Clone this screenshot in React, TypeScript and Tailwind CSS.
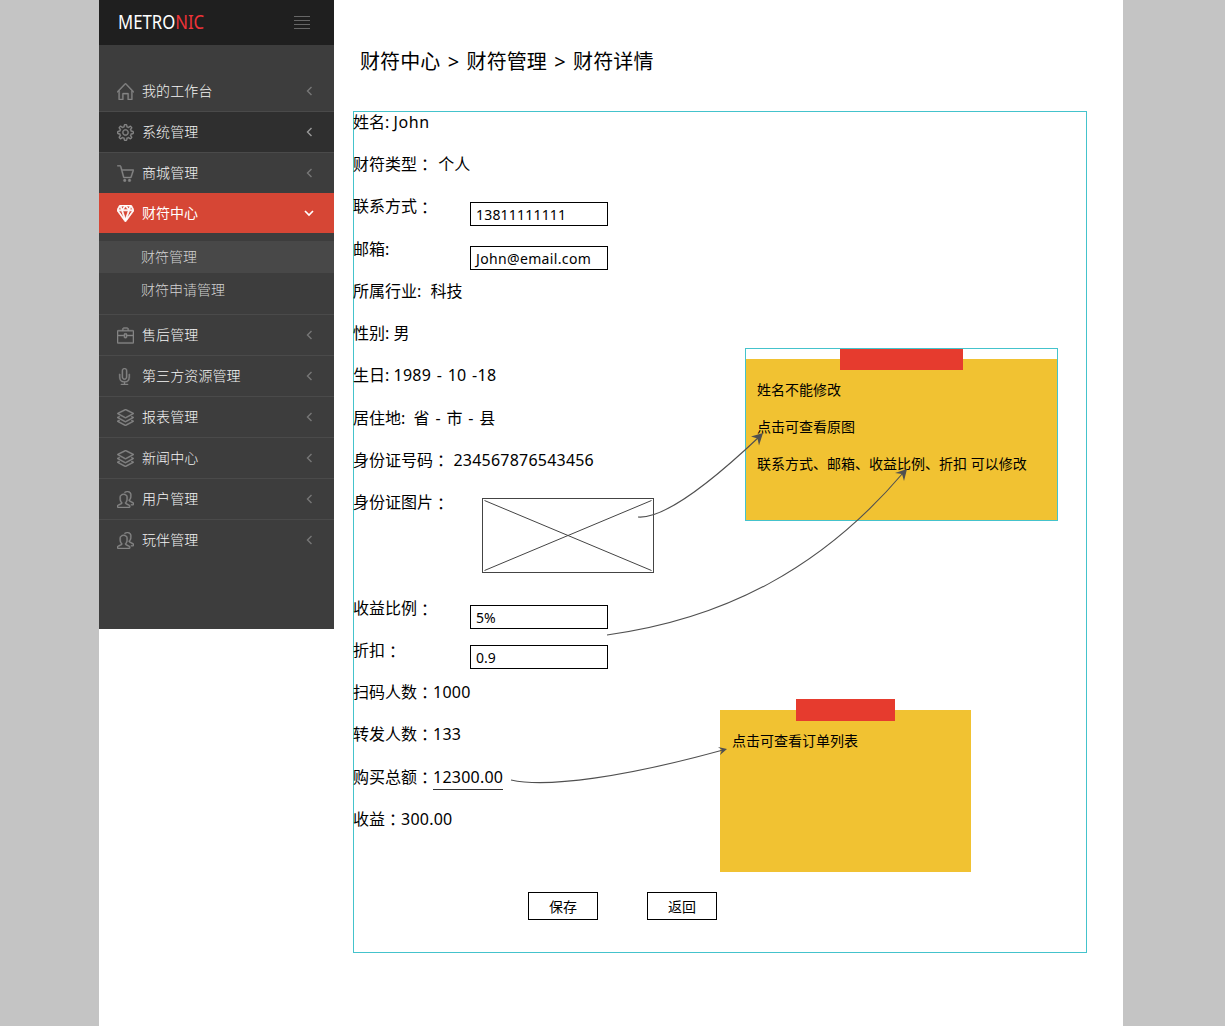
import React from 'react'
import { SlHome, SlSettings, SlBasket, SlDiamond, SlBriefcase, SlMicrophone, SlLayers, SlPeople } from 'react-icons/sl'

type Item = { label: string; icon: React.ReactNode; dark?: boolean; last?: boolean }

const ic = 'size-[17px] stroke-current [stroke-width:24]'
const topItems: Item[] = [
  { label: '我的工作台', icon: <SlHome className={ic} /> },
  { label: '系统管理', icon: <SlSettings className={ic} />, dark: true },
  { label: '商城管理', icon: <SlBasket className={ic} />, last: true },
]
const bottomItems: Item[] = [
  { label: '售后管理', icon: <SlBriefcase className={ic} /> },
  { label: '第三方资源管理', icon: <SlMicrophone className={`${ic} -ml-px`} /> },
  { label: '报表管理', icon: <SlLayers className={ic} /> },
  { label: '新闻中心', icon: <SlLayers className={ic} /> },
  { label: '用户管理', icon: <SlPeople className={ic} /> },
  { label: '玩伴管理', icon: <SlPeople className={ic} />, last: true },
]

function NavItem({ item }: { item: Item }) {
  return (
    <div
      className={`flex items-center border-b pl-[18px] pr-[21px] ${item.last ? 'h-10 border-transparent border-b-0' : 'h-[41px] border-[#4a4a4a]'} ${item.dark ? 'bg-[#2f2f2f]' : ''}`}
    >
      <span className="w-[25px] text-[#858585]">{item.icon}</span>
      <span className="flex-1 text-sm font-light tracking-[0.1px] text-[#f4f4f4]">{item.label}</span>
      <svg width="7" height="10" viewBox="0 0 7 10" fill="none" stroke={item.dark ? '#999' : '#777'} strokeWidth="1.4">
        <path d="M5.5 1 1.5 5l4 4" />
      </svg>
    </div>
  )
}

function Colon() {
  return <span className="relative top-[2px] font-['Noto_Sans_CJK_TC',sans-serif] leading-none">：</span>
}

function Num({ children }: { children: React.ReactNode }) {
  return <span className="tracking-[0.22px]">{children}</span>
}

function Row({ children, tall }: { children: React.ReactNode; tall?: boolean }) {
  return <div className={`flex items-start whitespace-pre ${tall ? 'h-[43px]' : 'h-[42px]'}`}>{children}</div>
}

function Label({ children }: { children: React.ReactNode }) {
  return <span className="h-[21px] w-[117px]">{children}</span>
}

function Field({ value, offset }: { value: string; offset: string }) {
  return (
    <span className={`h-6 w-[138px] border border-black pl-[5px] text-sm leading-[23px] ${offset}`}>{value}</span>
  )
}

function Button({ children }: { children: React.ReactNode }) {
  return <button className="h-7 w-[70px] border border-black pt-px text-sm leading-[26px]">{children}</button>
}

export default function App() {
  return (
    <div className="flex h-[1026px] w-[1225px] overflow-hidden bg-[#c4c4c4] pl-[99px] font-['Noto_Sans','Noto_Sans_CJK_SC',sans-serif] text-black">
      <div className="relative flex w-[1024px] bg-white">
        <aside className="flex h-[629px] w-[235px] shrink-0 flex-col bg-[#3d3d3d]">
          <div className="flex h-[45px] items-center justify-between bg-[#1f1f1f] pl-[19px] pr-6">
            <span className="w-[90px] origin-left scale-x-[0.88] text-[19px] leading-[45px] text-white">
              METRO<span className="text-[#ee3338]">NIC</span>
            </span>
            <span className="flex w-4 flex-col gap-[3px]">
              <i className="h-px bg-[#666]" />
              <i className="h-px bg-[#666]" />
              <i className="h-px bg-[#666]" />
              <i className="h-px bg-[#666]" />
            </span>
          </div>
          <nav className="pt-[26px]">
            {topItems.map((t) => (
              <NavItem key={t.label} item={t} />
            ))}
            <div className="flex h-10 items-center bg-[#d64635] pl-[18px] pr-5 text-white">
              <span className="w-[25px]">
                <SlDiamond className="size-[17px] stroke-white [stroke-width:45]" />
              </span>
              <span className="flex-1 text-sm">财符中心</span>
              <svg width="10" height="7" viewBox="0 0 10 7" fill="none" stroke="white" strokeWidth="1.7">
                <path d="m1 1 4 4 4-4" />
              </svg>
            </div>
            <div className="flex h-[82px] flex-col border-b border-[#4a4a4a] pt-2 text-sm font-light text-[#d2d2d2]">
              <div className="h-8 bg-[#484848] pl-[42px] leading-8">财符管理</div>
              <div className="h-[33px] pl-[42px] leading-[33px]">财符申请管理</div>
            </div>
            {bottomItems.map((t) => (
              <NavItem key={t.label} item={t} />
            ))}
          </nav>
        </aside>

        <main className="flex flex-col pl-[19px] pt-[47px]">
          <h1 className="h-16 whitespace-pre pl-[7px] text-[20px] leading-[30px] tracking-[0.1px] [word-spacing:2px]">财符中心 &gt; 财符管理 &gt; 财符详情</h1>
          <section className="flex h-[842px] w-[734px] flex-col border border-[#44c3cc]">
            <div className="-ml-px flex flex-col text-base leading-[21px]">
              <Row>姓名: <span className="tracking-[0.6px]">John</span></Row>
              <Row>财符类型<Colon /><span className="pl-px"> 个人</span></Row>
              <Row tall>
                <Label>联系方式<Colon /></Label>
                <Field value="13811111111" offset="mt-[6px] tracking-[0.2px]" />
              </Row>
              <Row>
                <Label>邮箱:</Label>
                <Field value="John@email.com" offset="mt-[7px] tracking-[0.35px]" />
              </Row>
              <Row>所属行业:  <span className="pl-px">科技</span></Row>
              <Row>性别: 男</Row>
              <Row tall>生日: <span className="tracking-[0.3px] [word-spacing:1px]">1989 - 10 -18</span></Row>
              <Row>居住地:  省<span className="[word-spacing:1.7px]"> - 市 - 县</span></Row>
              <Row>身份证号码<Colon /><Num> 234567876543456</Num></Row>
              <div className="flex h-[106px] items-start">
                <span className="h-[21px] w-[129px]">身份证图片<Colon /></span>
                <svg className="mt-[6px]" width="172" height="75" viewBox="0 0 172 75" fill="none" stroke="#444">
                  <rect x=".5" y=".5" width="171" height="74" />
                  <path d="M2.5 2.5 169.5 72.5M2.5 72.5 169.5 2.5" />
                </svg>
              </div>
              <Row>
                <Label>收益比例<Colon /></Label>
                <Field value="5%" offset="mt-[7px]" />
              </Row>
              <Row>
                <Label>折扣<Colon /></Label>
                <Field value="0.9" offset="mt-[5px]" />
              </Row>
              <Row>扫码人数<Colon /><Num>1000</Num></Row>
              <Row tall>转发人数<Colon /><Num>133</Num></Row>
              <Row>
                购买总额<Colon />
                <span className="h-[23px] border-b border-[#333] tracking-[0.22px]">12300.00</span>
              </Row>
              <Row>收益<Colon /><Num>300.00</Num></Row>
            </div>
            <div className="flex gap-[49px] pl-[174px] pt-[41px]">
              <Button>保存</Button>
              <Button>返回</Button>
            </div>
          </section>
        </main>

        <div className="absolute left-[646px] top-[348px] flex h-[173px] w-[313px] flex-col border border-[#44c3cc] pt-[10px]">
          <div className="flex-1 whitespace-pre bg-[#f1c232] pl-[11px] pt-5 text-sm leading-[22px]">
            <p className="mb-[15px]">姓名不能修改</p>
            <p className="mb-[15px]">点击可查看原图</p>
            <p>联系方式、邮箱、收益比例、折扣 可以修改</p>
          </div>
          <div className="absolute left-[94px] top-0 h-[21px] w-[123px] bg-[#e63b2e]" />
        </div>

        <div className="absolute left-[621px] top-[710px] h-[162px] w-[251px] bg-[#f1c232] pl-3 pt-5 text-sm leading-[22px]">
          点击可查看订单列表
          <div className="absolute -top-[11px] left-[76px] h-[22px] w-[99px] bg-[#e63b2e]" />
        </div>

        <svg className="pointer-events-none absolute left-0 top-0" width="1024" height="1026" viewBox="99 0 1024 1026" fill="none" stroke="#505050" strokeWidth="1.1">
          <path d="M638 517C662 519 705 488 759 437" />
          <path d="M607 635C725 619 822 568 903 473" />
          <path d="M511 780C548 788 625 777 723 750" />
          <g fill="#505050" stroke="none">
            <path d="m763 433-12 3.500 6.500 2 1.500 7z" />
            <path d="m907 469-12 4 7 1 2 7z" />
            <path d="m727 749-9-2 4 3-2 5z" />
          </g>
        </svg>
      </div>
    </div>
  )
}
